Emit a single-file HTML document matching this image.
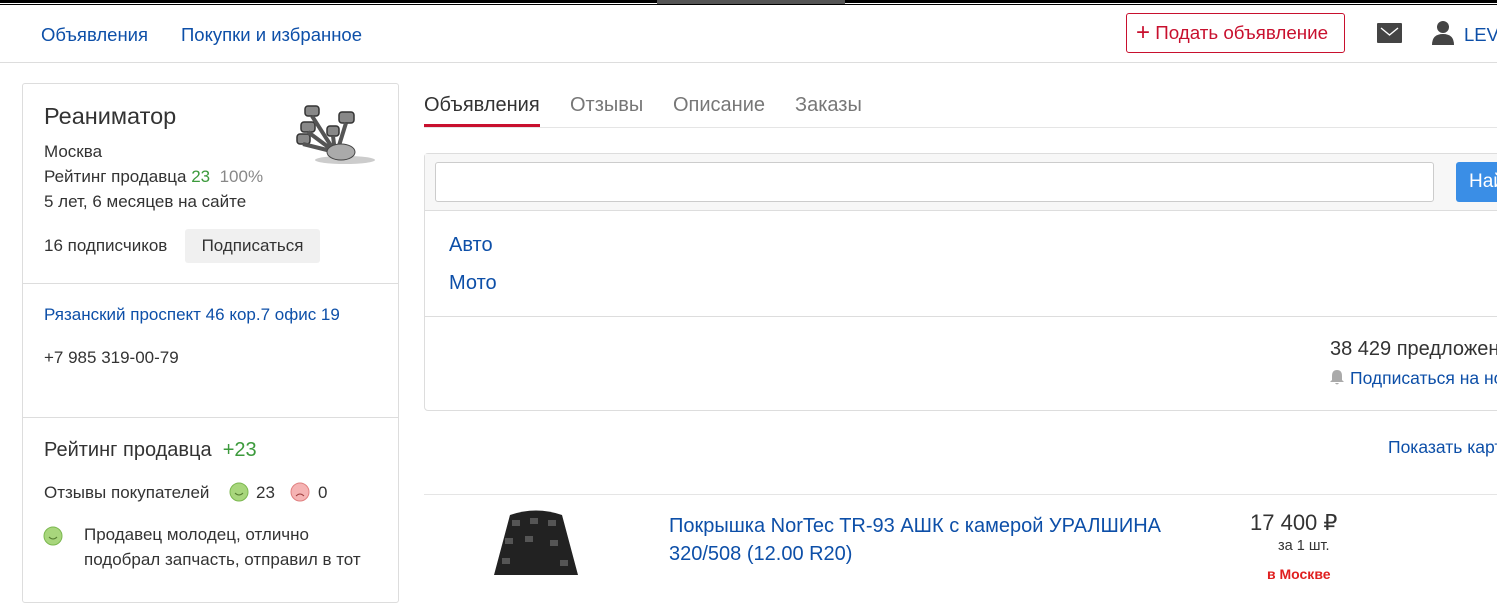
<!DOCTYPE html>
<html><head><meta charset="utf-8"><style>
*{box-sizing:border-box;margin:0;padding:0}
body{width:1497px;height:575px;overflow:hidden;background:#fff;font-family:"Liberation Sans",Arial,sans-serif;color:#333;position:relative}
.a{position:absolute;white-space:nowrap}
.blue{color:#0d4fa8}
</style></head><body>
<div class="a" style="left:0;top:0;width:1497px;height:3px;background:#000"></div>
<div class="a" style="left:0;top:4px;width:1497px;height:1px;background:#000"></div>
<div class="a" style="left:657px;top:0;width:188px;height:4px;background:#555"></div>
<div class="a blue" style="left:41px;top:24px;font-size:18.5px">Объявления</div>
<div class="a blue" style="left:181px;top:24px;font-size:18.5px">Покупки и избранное</div>
<div class="a" style="left:1126px;top:13px;width:219px;height:40px;border:1px solid #c8102e;border-radius:3px;color:#c8102e;font-size:18.8px;line-height:38px;padding-left:9px"><span style="font-size:24px;font-weight:300;vertical-align:-1px">+</span> Подать объявление</div>
<svg class="a" style="left:1377px;top:23px" width="25" height="20" viewBox="0 0 25 20"><rect width="25" height="20" rx="1" fill="#444"/><path d="M4 5 L12.5 12 L21 5" stroke="#fff" stroke-width="1.4" fill="none"/></svg>
<svg class="a" style="left:1431px;top:20px" width="24" height="25" viewBox="0 0 24 25"><circle cx="12" cy="7" r="6" fill="#444"/><path d="M1 25 Q1 14 12 14 Q23 14 23 25Z" fill="#444"/></svg>
<div class="a blue" style="left:1464px;top:24px;font-size:18.5px">LEV</div>
<div class="a" style="left:0;top:62px;width:1497px;height:1px;background:#ddd"></div>

<div class="a" style="left:22px;top:83px;width:377px;height:520px;border:1px solid #ddd;border-radius:3px"></div>
<div class="a" style="left:44px;top:103px;font-size:23.5px;color:#333">Реаниматор</div>
<svg class="a" style="left:295px;top:102px" width="82" height="64" viewBox="0 0 82 64"><ellipse cx="50" cy="58" rx="30" ry="4" fill="#ccc"/><g fill="#888" stroke="#333" stroke-width="1.5"><rect x="10" y="4" width="14" height="10" rx="3"/><rect x="44" y="10" width="15" height="11" rx="3"/><rect x="6" y="20" width="14" height="10" rx="3"/><rect x="2" y="32" width="13" height="10" rx="3"/><rect x="32" y="24" width="12" height="10" rx="3"/></g><path d="M17 14 L40 50 M13 30 L40 50 M8 42 L40 50 M51 21 L42 50 M38 34 L40 50" stroke="#555" stroke-width="4"/><ellipse cx="46" cy="50" rx="14" ry="8" fill="#aaa" stroke="#444"/></svg>
<div class="a" style="left:44px;top:142px;font-size:17px">Москва</div>
<div class="a" style="left:44px;top:167px;font-size:17px">Рейтинг продавца <span style="color:#3c9a3c">23</span>&nbsp; <span style="color:#888">100%</span></div>
<div class="a" style="left:44px;top:192px;font-size:17px">5 лет, 6 месяцев на сайте</div>
<div class="a" style="left:44px;top:236px;font-size:17px">16 подписчиков</div>
<div class="a" style="left:185px;top:229px;width:135px;height:34px;background:#f0f0f0;border-radius:3px;font-size:17px;line-height:34px;text-align:center">Подписаться</div>
<div class="a" style="left:23px;top:283px;width:375px;height:1px;background:#ddd"></div>
<div class="a blue" style="left:44px;top:305px;font-size:17px">Рязанский проспект 46 кор.7 офис 19</div>
<div class="a" style="left:44px;top:348px;font-size:17px">+7 985 319-00-79</div>
<div class="a" style="left:23px;top:417px;width:375px;height:1px;background:#ddd"></div>
<div class="a" style="left:44px;top:439px;font-size:20px">Рейтинг продавца &nbsp;<span style="color:#3c9a3c">+23</span></div>
<div class="a" style="left:44px;top:483px;font-size:17px">Отзывы покупателей</div>
<svg class="a" style="left:229px;top:482px" width="20" height="20"><circle cx="10" cy="10" r="9" fill="#a8d67c" stroke="#7cb850"/><path d="M6 11 Q10 15 14 11" stroke="#557d30" fill="none"/></svg>
<div class="a" style="left:256px;top:483px;font-size:17px">23</div>
<svg class="a" style="left:290px;top:482px" width="20" height="20"><circle cx="10" cy="10" r="9" fill="#f5b3b3" stroke="#e08080"/><path d="M6 14 Q10 10 14 14" stroke="#a04040" fill="none"/></svg>
<div class="a" style="left:318px;top:483px;font-size:17px">0</div>
<svg class="a" style="left:43px;top:526px" width="20" height="20"><circle cx="10" cy="10" r="9" fill="#a8d67c" stroke="#7cb850"/><path d="M6 11 Q10 15 14 11" stroke="#557d30" fill="none"/></svg>
<div class="a" style="left:84px;top:522px;font-size:17px;line-height:25px">Продавец молодец, отлично<br>подобрал запчасть, отправил в тот</div>

<div class="a" style="left:424px;top:94px;font-size:20px;color:#333">Объявления</div>
<div class="a" style="left:424px;top:124px;width:116px;height:3px;background:#c8102e"></div>
<div class="a" style="left:570px;top:94px;font-size:20px;color:#777">Отзывы</div>
<div class="a" style="left:673px;top:94px;font-size:20px;color:#777">Описание</div>
<div class="a" style="left:795px;top:94px;font-size:20px;color:#777">Заказы</div>
<div class="a" style="left:424px;top:127px;width:1073px;height:1px;background:#e5e5e5"></div>

<div class="a" style="left:424px;top:153px;width:1090px;height:258px;border:1px solid #ddd;border-radius:4px"></div>
<div class="a" style="left:425px;top:154px;width:1072px;height:57px;background:#f7f7f7;border-bottom:1px solid #ddd"></div>
<div class="a" style="left:435px;top:162px;width:999px;height:40px;background:#fff;border:1px solid #ccc;border-radius:3px"></div>
<div class="a" style="left:1456px;top:162px;width:60px;height:40px;background:#3a8ee6;border-radius:3px;color:#fff;font-size:19px;line-height:40px;padding-left:13px">Найти</div>
<div class="a blue" style="left:449px;top:234px;font-size:20px">Авто</div>
<div class="a blue" style="left:449px;top:272px;font-size:20px">Мото</div>
<div class="a" style="left:425px;top:316px;width:1072px;height:1px;background:#ddd"></div>
<div class="a" style="left:1330px;top:338px;font-size:20px">38 429 предложен</div>
<svg class="a" style="left:1330px;top:369px" width="14" height="16" viewBox="0 0 14 16"><path d="M7 1 Q2 1 2 7 L2 11 L0 13 L14 13 L12 11 L12 7 Q12 1 7 1Z M5 14 L9 14 Q7 17 5 14Z" fill="#aaa"/></svg>
<div class="a blue" style="left:1350px;top:368px;font-size:17.5px">Подписаться на но</div>
<div class="a blue" style="left:1388px;top:437px;font-size:17.5px">Показать карт</div>
<div class="a" style="left:424px;top:494px;width:1073px;height:1px;background:#e5e5e5"></div>
<svg class="a" style="left:490px;top:510px" width="92" height="65" viewBox="0 0 92 65"><path d="M20 5 Q46 -4 72 5 L88 65 L4 65Z" fill="#222"/><g fill="#555"><rect x="22" y="10" width="8" height="6"/><rect x="40" y="8" width="8" height="6"/><rect x="58" y="10" width="8" height="6"/><rect x="15" y="28" width="8" height="6"/><rect x="35" y="26" width="8" height="6"/><rect x="60" y="30" width="8" height="6"/><rect x="12" y="48" width="8" height="6"/><rect x="70" y="50" width="8" height="6"/></g></svg>
<div class="a blue" style="left:669px;top:512px;font-size:20px;line-height:28px">Покрышка NorTec TR-93 АШК с камерой УРАЛШИНА<br>320/508 (12.00 R20)</div>
<div class="a" style="left:1250px;top:510px;font-size:22px">17 400 ₽</div>
<div class="a" style="left:1278px;top:538px;font-size:14.5px">за 1 шт.</div>
<div class="a" style="left:1267px;top:566px;font-size:14px;color:#e02020;font-weight:bold">в Москве</div>
</body></html>
